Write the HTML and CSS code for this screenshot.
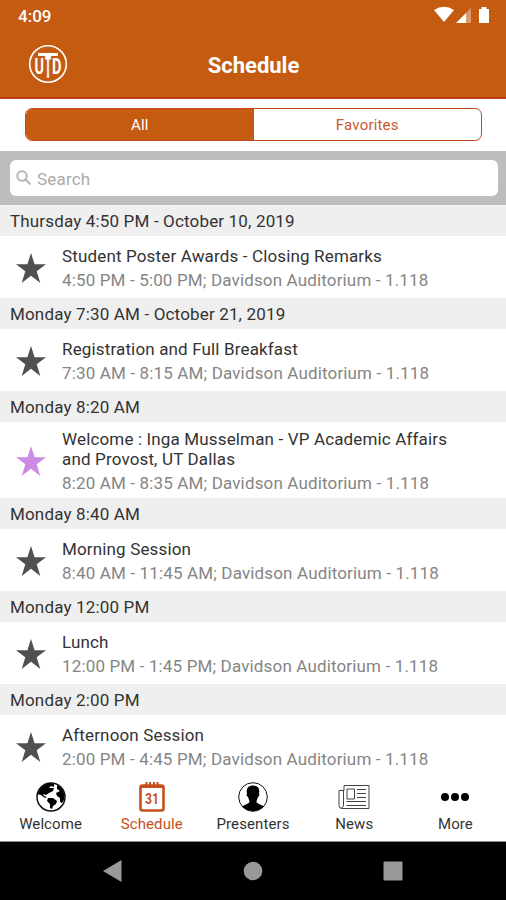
FILE: index.html
```html
<!doctype html>
<html lang="en">
<head>
  <meta charset="UTF-8">
  <title>Schedule</title>
  <link rel="stylesheet" href="styles.css">
</head>
<body>
  <svg class="defs" width="0" height="0">
    <symbol id="star" viewBox="0 0 30 30">
      <path d="M15 0l3.600 11.200H30l-9.300 7L24.300 30 15 22.800 5.700 30l3.600-11.800-9.300-7h11.400z"/>
    </symbol>
  </svg>
  <header>
    <div class="status">
      <span class="clock">4:09</span>
      <svg class="signals" width="57" height="18" viewBox="0 0 57 18">
        <path d="M0 4Q10-2.500 20 4L10 16z"/>
        <path d="M37 2v15h-5V7z" opacity=".4"/>
        <path d="M22 17l10-10V17z"/>
        <path d="M45 3h2.500V1h5v2H55v14H45z"/>
      </svg>
    </div>
    <div class="navbar">
      <svg class="logo" width="40" height="40" viewBox="0 0 40 40">
        <circle cx="20" cy="20" r="18.300"/>
        <rect x="10" y="9" width="20" height="3"/>
        <text x="6.500" y="29.500" textLength="9.500" lengthAdjust="spacingAndGlyphs" font-size="22">U</text>
        <text x="17.200" y="32.500" textLength="5.600" lengthAdjust="spacingAndGlyphs" font-size="32" stroke="#fff" stroke-width="1.500">T</text>
        <text x="24" y="29.500" textLength="9.500" lengthAdjust="spacingAndGlyphs" font-size="22">D</text>
      </svg>
      <h1>Schedule</h1>
    </div>
  </header>
  <div class="filter">
    <div class="segments">
      <a class="segment active">All</a>
      <a class="segment">Favorites</a>
    </div>
  </div>
  <div class="search">
    <div class="search-box">
      <svg width="16" height="16" viewBox="0 0 16 16">
        <circle cx="6" cy="6" r="4.700"/>
        <path d="M9.500 9.500l5 5"/>
      </svg>
      <span>Search</span>
    </div>
  </div>
  <main>
    <h2>Thursday 4:50 PM - October 10, 2019</h2>
    <div class="session">
      <svg class="star"><use href="#star"/></svg>
      <div>
        <p class="name">Student Poster Awards - Closing Remarks</p>
        <p class="place">4:50 PM - 5:00 PM; Davidson Auditorium - 1.118</p>
      </div>
    </div>
    <h2>Monday 7:30 AM - October 21, 2019</h2>
    <div class="session">
      <svg class="star"><use href="#star"/></svg>
      <div>
        <p class="name">Registration and Full Breakfast</p>
        <p class="place">7:30 AM - 8:15 AM; Davidson Auditorium - 1.118</p>
      </div>
    </div>
    <h2>Monday 8:20 AM</h2>
    <div class="session tall">
      <svg class="star favorite"><use href="#star"/></svg>
      <div>
        <p class="name">Welcome : Inga Musselman - VP Academic Affairs<br>and Provost, UT Dallas</p>
        <p class="place">8:20 AM - 8:35 AM; Davidson Auditorium - 1.118</p>
      </div>
    </div>
    <h2>Monday 8:40 AM</h2>
    <div class="session">
      <svg class="star"><use href="#star"/></svg>
      <div>
        <p class="name">Morning Session</p>
        <p class="place">8:40 AM - 11:45 AM; Davidson Auditorium - 1.118</p>
      </div>
    </div>
    <h2>Monday 12:00 PM</h2>
    <div class="session">
      <svg class="star"><use href="#star"/></svg>
      <div>
        <p class="name">Lunch</p>
        <p class="place">12:00 PM - 1:45 PM; Davidson Auditorium - 1.118</p>
      </div>
    </div>
    <h2>Monday 2:00 PM</h2>
    <div class="session">
      <svg class="star"><use href="#star"/></svg>
      <div>
        <p class="name">Afternoon Session</p>
        <p class="place">2:00 PM - 4:45 PM; Davidson Auditorium - 1.118</p>
      </div>
    </div>
  </main>
  <nav class="tabs">
    <a>
      <svg width="32" height="32" viewBox="0 0 32 32">
        <circle cx="16" cy="16" r="14" fill="none" stroke="#111" stroke-width="1.500"/>
        <path d="M4 10C7 5 10 3 15 2l4 1 0 3-3-1-2 2 5 0-1 3-4 2-3 2-3-1 1 2 3 1-2 1-4-3-4-1zM22 4c4 2 6 5 7.500 9l-.5 6-2 3-2-1v-4l-3-2-1-3 4-2-3-2zM13 17l5 0 4 3-1 3-3 2-1 3-2-1 0-4-3-3z"/>
      </svg>
      <span>Welcome</span>
    </a>
    <a class="current">
      <svg width="32" height="32" viewBox="0 0 32 32">
        <rect x="4.500" y="4.500" width="23" height="25" rx="2" fill="none" stroke="currentColor" stroke-width="2.600"/>
        <path d="M4 4h24v3H4z"/>
        <path d="M10.500 1v6M14 1v6M18 1v6M21.500 1v6" stroke="currentColor" stroke-width="2"/>
        <text class="day" x="9" y="22.500" textLength="14" lengthAdjust="spacingAndGlyphs">31</text>
      </svg>
      <span>Schedule</span>
    </a>
    <a>
      <svg width="32" height="32" viewBox="0 0 32 32">
        <circle cx="16" cy="16" r="14.300" fill="none" stroke="#111" stroke-width="1"/>
        <path d="M16 4.500c5.500 0 7 4 6 8 1 1 0 3-1 3.500-.5 2-1.500 3-1.500 5 1 2 5 2.500 7 4.500-5 6-16 6-21 0 2-2 6-2.500 7-4.500 0-2-1-3-1.500-5-1-.5-2-2.500-1-3.500-1-4 .5-8 6-8z"/>
      </svg>
      <span>Presenters</span>
    </a>
    <a>
      <svg width="32" height="32" viewBox="0 0 32 32" fill="none" stroke="#444">
        <path d="M6 4.500h25v23H4q-3 0-3-3V9.500h5z M5.500 9.500v15q0 2-2 2"/>
        <path d="M9 8h7.500v10H9zM19 8.500h9M19 12.500h9M19 16.500h9M8.500 20.500H28M8.500 24.500H28"/>
      </svg>
      <span>News</span>
    </a>
    <a>
      <svg width="32" height="32" viewBox="0 0 32 32">
        <circle cx="6" cy="16" r="4"/>
        <circle cx="16" cy="16" r="4"/>
        <circle cx="26" cy="16" r="4"/>
      </svg>
      <span>More</span>
    </a>
  </nav>
  <footer>
    <svg width="20" height="22" viewBox="0 0 20 22"><path d="M0 11L18.500 0v22z"/></svg>
    <svg width="20" height="20" viewBox="0 0 20 20"><circle cx="10" cy="10" r="9.300"/></svg>
    <svg width="20" height="20" viewBox="0 0 20 20"><rect x=".5" y=".5" width="19" height="19" rx="1"/></svg>
  </footer>
</body>
</html>
```
FILE: styles.css
```css
body, h1, h2, p {
  margin: 0;
  padding: 0;
}

body {
  width: 506px;
  height: 900px;
  overflow: hidden;
  display: flex;
  flex-direction: column;
  background: #fff;
  font-family: Roboto, "Liberation Sans", sans-serif;
  font-size: 17px;
  color: #333;
}

.defs {
  position: absolute;
}

header {
  box-sizing: border-box;
  height: 99px;
  flex: none;
  background: #c55a11;
  border-bottom: 2px solid #bd3b12;
  color: #fff;
}

.status {
  height: 32px;
  padding: 0 15px 0 18px;
  display: flex;
  align-items: center;
  justify-content: space-between;
}

.clock {
  font-size: 17px;
  font-weight: 500;
}

.signals {
  fill: #fff;
  margin-top: -2px;
}

.navbar {
  height: 66px;
  padding: 0 28px;
  display: grid;
  grid-template-columns: 40px 1fr 40px;
  align-items: center;
}

.logo {
  fill: #fff;
  font-weight: 700;
  margin-top: -2px;
}

.logo circle {
  fill: none;
  stroke: #fff;
  stroke-width: 1.6;
}

h1 {
  font-size: 22px;
  font-weight: 700;
  text-align: center;
  padding-left: 1px;
}

.filter {
  height: 52px;
  flex: none;
  box-sizing: border-box;
  padding: 9px 24px 0 25px;
}

.segments {
  display: flex;
  height: 33px;
  box-sizing: border-box;
  border: 1px solid #c5491b;
  border-radius: 7px;
  overflow: hidden;
}

.segment {
  flex: 1;
  text-align: center;
  line-height: 33px;
  font-size: 15px;
  letter-spacing: .2px;
  color: #c85a30;
}

.segment.active {
  background: #c55a11;
  color: #fff;
}

.search {
  height: 54px;
  flex: none;
  box-sizing: border-box;
  padding: 9px 8px 9px 10px;
  background: #bdbdbd;
}

.search-box {
  height: 36px;
  display: flex;
  align-items: center;
  gap: 5px;
  padding-left: 6px;
  background: #fff;
  border-radius: 6px;
  color: #aaa;
  letter-spacing: .2px;
}

.search-box span {
  padding-top: 1px;
}

.search-box svg {
  fill: none;
  stroke: #b5b5b5;
  stroke-width: 2;
}

main {
  flex: none;
  height: 572px;
  overflow: hidden;
}

h2 {
  height: 31px;
  padding-left: 10px;
  background: #efefef;
  font-size: 17px;
  line-height: 33px;
  font-weight: 400;
  letter-spacing: .16px;
}

.session {
  height: 62px;
  box-sizing: border-box;
  padding-top: 2px;
  display: flex;
  align-items: center;
}

.session.tall {
  height: 76px;
}

.star {
  width: 30px;
  height: 30px;
  margin: 0 16px;
  fill: #505050;
}

.favorite {
  fill: #cb8be3;
}

.name {
  line-height: 20px;
  letter-spacing: .15px;
}

.place {
  margin-top: 4px;
  line-height: 20px;
  letter-spacing: .15px;
  color: #858585;
}

.tabs {
  height: 65px;
  flex: none;
  box-sizing: border-box;
  padding-top: 4px;
  border-bottom: 1px solid #888;
  display: flex;
}

.tabs a {
  flex: 1;
  display: flex;
  flex-direction: column;
  align-items: center;
  font-size: 15px;
  letter-spacing: .1px;
}

.tabs span {
  line-height: 23px;
}

.tabs .current {
  color: #c5501b;
  fill: currentColor;
}

.day {
  font-size: 15px;
  font-weight: 700;
  letter-spacing: 0;
}

footer {
  flex: 1;
  display: flex;
  align-items: center;
  justify-content: center;
  gap: 120px;
  background: #000;
  fill: #999;
}
```
